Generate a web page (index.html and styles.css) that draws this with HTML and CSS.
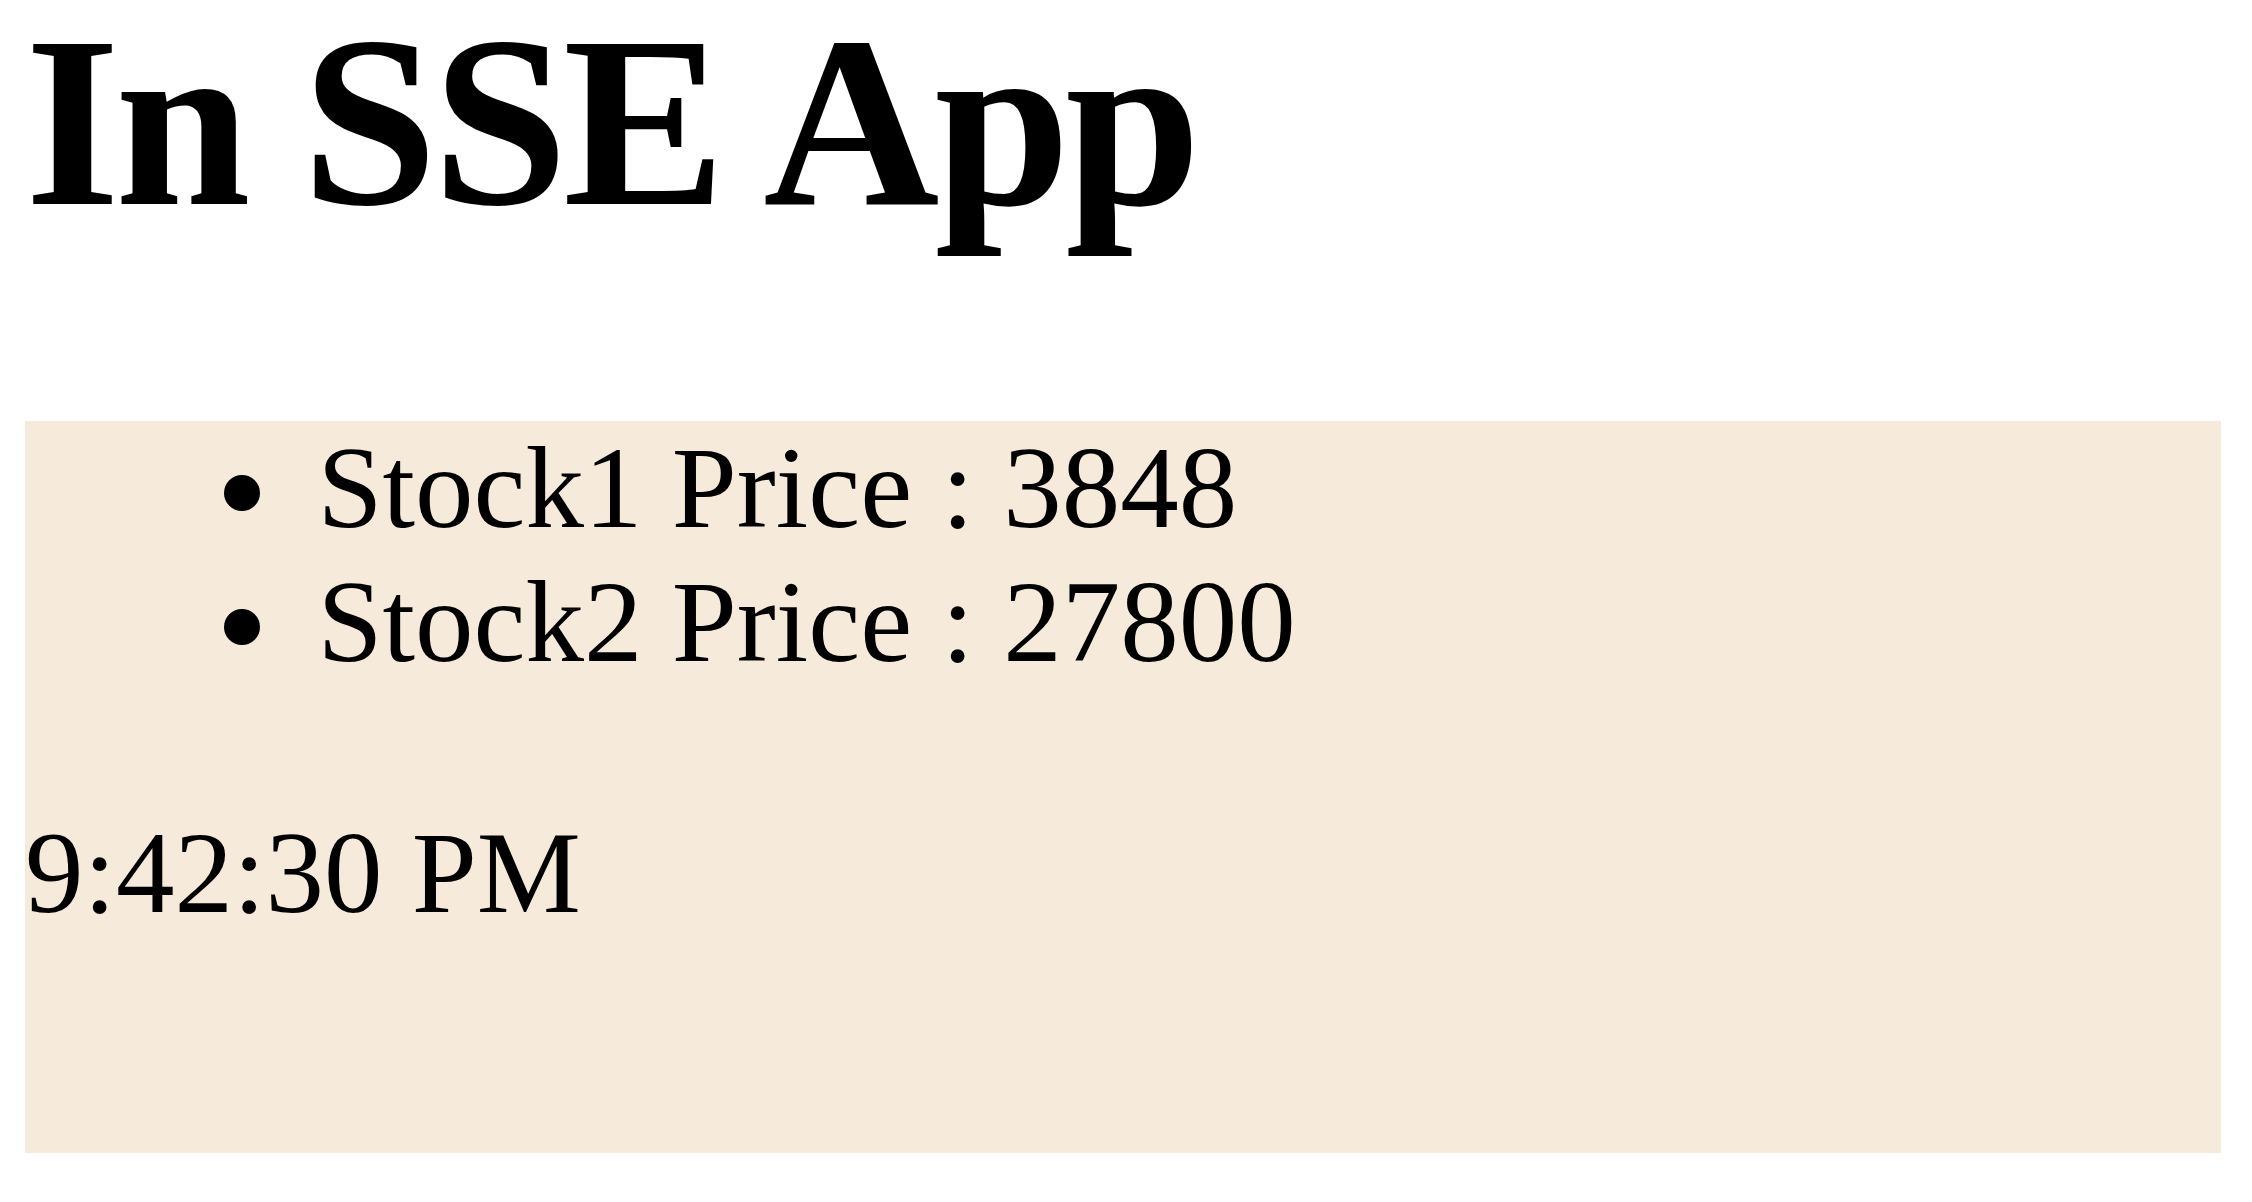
FILE: index.html
```html
<!DOCTYPE html>
<html lang="en">
<head>
<meta charset="utf-8">
<title>In SSE App</title>
<link rel="stylesheet" href="styles.css">
</head>
<body>
  <h1 class="title">In SSE App</h1>
  <div class="feed">
    <ul class="prices">
      <li>Stock1 Price : 3848</li>
      <li>Stock2 Price : 27800</li>
    </ul>
    <div class="clock">9:42:30 PM</div>
  </div>
</body>
</html>
```

FILE: styles.css
```css
html, body {
  background: #ffffff;
}

body {
  margin: 0;
  padding: 0 31px 0 25px;
  font-family: "Liberation Serif", "Times New Roman", serif;
  font-size: 117px;
  color: #000000;
}

.title {
  font-size: 244px;
  font-weight: bold;
  line-height: 1;
  letter-spacing: -5px;
  margin: 0 0 177px 0;
}

.feed {
  background: #f6eadb;
  height: 732px;
}

.prices {
  margin: 0 0 1em 0;
  padding: 0 0 0 2.5em;
  list-style: none;
}

/* round disc bullet drawn in the line, ahead of each price */
.prices li::before {
  content: "";
  display: inline-block;
  width: 36px;
  height: 36px;
  border-radius: 50%;
  background: #000000;
  margin: 0 58px 0 -94px;
  vertical-align: 16px;
}

.clock {
  margin: 0;
}
```
